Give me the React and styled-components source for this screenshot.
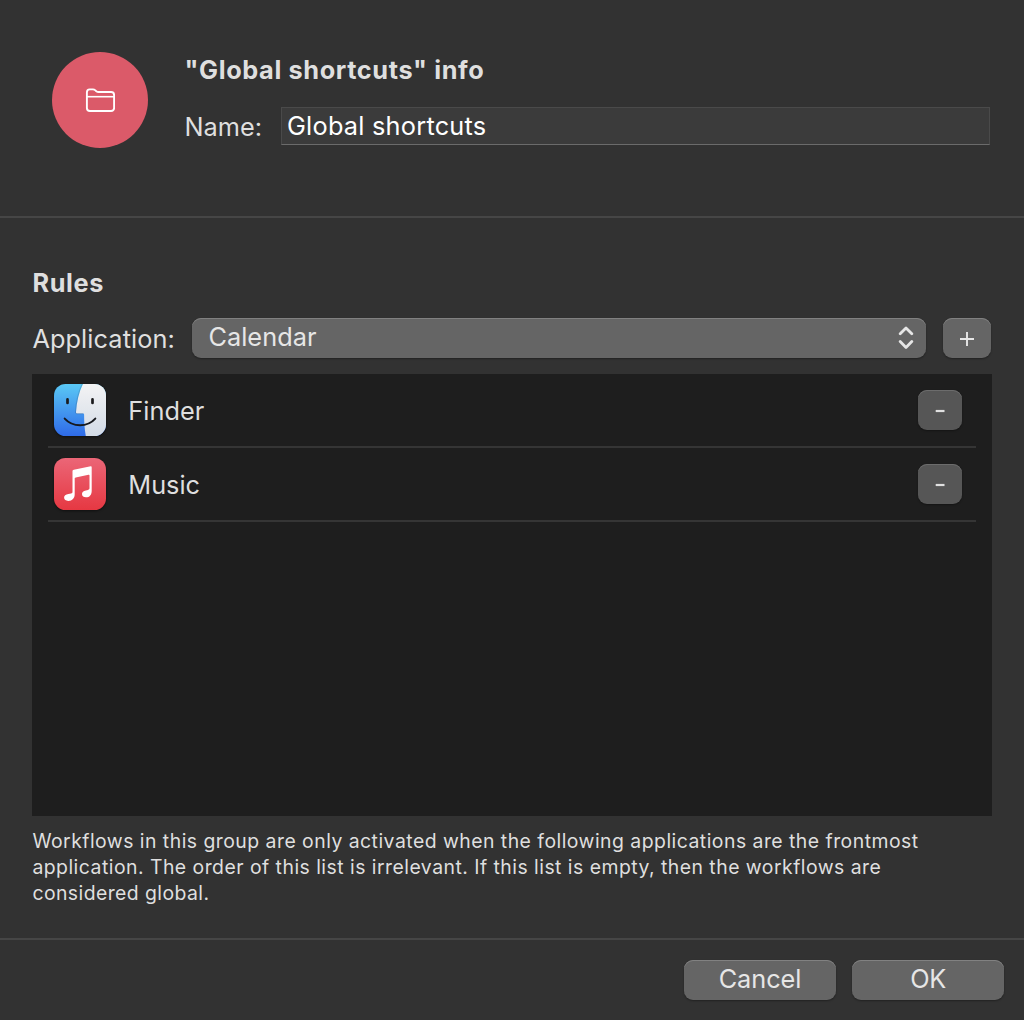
import React from "react";
import styled, { createGlobalStyle } from "styled-components";

const GlobalStyle = createGlobalStyle`
  * { box-sizing: border-box; }
  html, body { margin: 0; background: #323232; }
  body, button, input {
    font-family: Inter, "Liberation Sans", sans-serif;
    font-size: 25.3px;
    line-height: 32px;
    color: #dfdfdf;
  }
`;

const Dialog = styled.div`
  width: 1024px;
  height: 1020px;
  display: flex;
  flex-direction: column;
  overflow: hidden;
  background: #323232;
`;

const Header = styled.header`
  height: 218px;
  flex: none;
  display: flex;
  gap: 36px;
  padding: 52px 34px 0 52px;
  border-bottom: 2px solid #464646;
`;

const Badge = styled.div`
  width: 96px;
  height: 96px;
  flex: none;
  display: grid;
  place-items: center;
  border-radius: 50%;
  background: #db5a69;
`;

const Details = styled.div`
  flex: 1;
  display: flex;
  flex-direction: column;
`;

const Heading = styled.h2`
  margin: 0;
  padding: ${(p) => p.$top || 0}px 0 0 0.5px;
  font-size: 25.3px;
  line-height: 32px;
  font-weight: 700;
  letter-spacing: ${(p) => p.$track}px;
  white-space: nowrap;
`;

const Label = styled.label`
  display: block;
  width: ${(p) => p.$width}px;
  flex: none;
  padding: ${(p) => p.$top}px 0 0 0.4px;
  letter-spacing: ${(p) => p.$track}px;
  white-space: nowrap;
`;

const NameRow = styled.div`
  display: flex;
  margin-top: 21px;
`;

const NameInput = styled.input`
  flex: 1;
  min-width: 0;
  height: 38px;
  padding: 0 5px 2px;
  margin: 0;
  border: 1px solid #4a4a4a;
  border-bottom-color: #6b6b6b;
  border-radius: 0;
  outline: none;
  background: #3b3b3b;
  color: #fff;
  letter-spacing: ${(p) => p.$track}px;
`;

const Body = styled.main`
  flex: 1;
  padding: 49px 32px 0;
`;

const PickerRow = styled.div`
  display: flex;
  margin-top: 19px;
`;

const Button = styled.button`
  width: ${(p) => p.$width}px;
  height: 40px;
  flex: none;
  display: flex;
  align-items: center;
  justify-content: center;
  padding: 0 0 2px;
  border: 0;
  border-radius: 9px;
  background: ${(p) => (p.$dim ? "#565656" : "#656565")};
  box-shadow: inset 0 1px 0 ${(p) => (p.$dim ? "#6c6c6c" : "#818181")},
    0 1px 2px rgba(0, 0, 0, 0.35);
  color: #e6e6e6;
  letter-spacing: ${(p) => p.$track || 0}px;
`;

const Select = styled(Button)`
  justify-content: space-between;
  padding: 0 12px 2px 16.4px;
  margin-right: 17px;
`;

const SymbolButton = styled(Button)`
  padding: 1px 0 0;
`;

const List = styled.ul`
  height: 442px;
  margin: 16px 0 0;
  padding: 0 16px;
  list-style: none;
  background: #1e1e1e;
`;

const Item = styled.li`
  height: 74px;
  display: flex;
  align-items: center;
  padding: 0 14px 0 6px;
  border-bottom: 2px solid #353535;
`;

const AppName = styled.span`
  flex: 1;
  padding: 2px 0 0 21.3px;
  letter-spacing: ${(p) => p.$track}px;
`;

const AppIcon = styled.svg`
  display: block;
  width: 54px;
  height: 54px;
  margin: 0 0 0 -1px;
  overflow: visible;
  filter: drop-shadow(0 1px 1px rgba(0, 0, 0, 0.5));
`;

const Hint = styled.p`
  margin: 12px 0 0;
  padding-left: 0.4px;
  font-size: 19.4px;
  line-height: 26px;
  white-space: nowrap;
`;

const HintLine = styled.span`
  display: block;
  letter-spacing: ${(p) => p.$track}px;
`;

const Footer = styled.footer`
  height: 82px;
  flex: none;
  display: flex;
  justify-content: flex-end;
  gap: 16px;
  padding: 20px 20px 0;
  border-top: 2px solid #464646;
`;

function FolderIcon() {
  return (
    <svg width="30" height="24" viewBox="0 0 30 24" fill="none" stroke="#fff" strokeWidth="1.9" strokeLinejoin="round">
      <path d="M1.9 4.4c0-2 .8-3 2.8-3h3.2c1.2 0 1.7.3 2.5 1l.9.8c.7.5 1.2.8 2.2.8h12.6c2 0 3 1 3 3v13c0 2-1 3-3 3H4.9c-2 0-3-1-3-3z" />
      <path d="M1.9 8.7h27.2" strokeWidth="1.6" />
    </svg>
  );
}

function FinderIcon() {
  return (
    <AppIcon viewBox="0 0 54 54">
      <defs>
        <linearGradient id="sky" x1="0" y1="0" x2="0" y2="1">
          <stop offset="0" stopColor="#5ac8f5" />
          <stop offset="1" stopColor="#2f6be8" />
        </linearGradient>
        <linearGradient id="silver" x1="0" y1="0" x2="0" y2="1">
          <stop offset="0" stopColor="#f3f3f4" />
          <stop offset="1" stopColor="#d3dbe6" />
        </linearGradient>
        <clipPath id="tile"><rect x="1" y="1" width="52" height="52" rx="11.5" /></clipPath>
      </defs>
      <g clipPath="url(#tile)">
        <rect x="1" y="1" width="52" height="52" fill="url(#sky)" />
        <path d="M30 1C26 9 23.7 19 23 28.9c0 1 .4 1.5 1.3 1.5h5.8c.7 0 1 .4 1 1.1 0 7 .4 14.3 1.7 21.5H53V1z" fill="url(#silver)" />
        <path d="M29.2 1C25.2 9 23 19 22.5 28.9c0 1.2.6 1.8 1.6 1.8h6" fill="none" stroke="#25303d" strokeOpacity=".3" strokeWidth=".6" />
      </g>
      <path d="M14.5 16.4v3.6M39.5 16.4v3.6" stroke="#1b1b1d" strokeWidth="2.7" strokeLinecap="round" />
      <path d="M11.7 35.6c8 8.8 22.7 8.8 30.6 0" fill="none" stroke="#17191d" strokeWidth="2" strokeLinecap="round" />
    </AppIcon>
  );
}

function MusicIcon() {
  return (
    <AppIcon viewBox="0 0 54 54">
      <defs>
        <linearGradient id="rose" x1="0" y1="0" x2="0" y2="1">
          <stop offset="0" stopColor="#eb6677" />
          <stop offset="1" stopColor="#e63842" />
        </linearGradient>
      </defs>
      <rect x="1" y="1" width="52" height="52" rx="11.5" fill="url(#rose)" />
      <path
        d="M37.7 9.3 20.8 12.7c-.9.2-1.3.7-1.3 1.6v20.4c0 1-.5 1.6-1.5 1.8l-2.6.5c-2.8.5-4.3 1.7-4.3 3.6 0 2.1 1.7 3.3 4.2 3.3 4 0 6.4-2.6 6.4-6.6V21.8c0-.7.3-1 1-1.2l12.8-2.8c.7-.2 1 .1 1 .8v12.5c0 1-.5 1.6-1.5 1.8l-2.1.5c-2.6.5-3.9 1.7-3.9 3.6 0 2.1 1.6 3.3 4 3.3 3.6 0 5.7-2.6 5.7-6.4V10.4c0-.8-.3-1.2-1-1.1z"
        fill="#fff"
      />
    </AppIcon>
  );
}

function Chevrons() {
  return (
    <svg width="16" height="24" viewBox="0 0 16 24" fill="none" stroke="#e6e6e6" strokeWidth="2.8" strokeLinecap="round" strokeLinejoin="round">
      <path d="M2.2 8.8 8 3l5.8 5.8M2.2 16.6 8 22.4l5.8-5.8" />
    </svg>
  );
}

function Plus() {
  return (
    <svg width="14" height="14" viewBox="0 0 14 14" stroke="#e6e6e6" strokeWidth="1.9">
      <path d="M0 7h14M7 0v14" />
    </svg>
  );
}

function Minus() {
  return (
    <svg width="10" height="4" viewBox="0 0 10 4" stroke="#e0e0e0" strokeWidth="2.2">
      <path d="M.7 2h8.8" />
    </svg>
  );
}

const apps = [
  { name: "Finder", Icon: FinderIcon, track: 0.05 },
  { name: "Music", Icon: MusicIcon, track: 0 },
];

const hintLines = [
  { text: "Workflows in this group are only activated when the following applications are the frontmost", track: 0.475 },
  { text: "application. The order of this list is irrelevant. If this list is empty, then the workflows are", track: 0.475 },
  { text: "considered global.", track: 0.43 },
];

export default function App() {
  return (
    <Dialog>
      <GlobalStyle />
      <Header>
        <Badge><FolderIcon /></Badge>
        <Details>
          <Heading $top={2} $track={0.62}>"Global shortcuts" info</Heading>
          <NameRow>
            <Label htmlFor="name" $width={97} $top={4} $track={0.05}>Name:</Label>
            <NameInput id="name" defaultValue="Global shortcuts" $track={0.24} />
          </NameRow>
        </Details>
      </Header>
      <Body>
        <Heading $track={0.6}>Rules</Heading>
        <PickerRow>
          <Label $width={160} $top={5} $track={0.1}>Application:</Label>
          <Select $width={734} $track={0.05}>Calendar<Chevrons /></Select>
          <SymbolButton $width={48} aria-label="Add"><Plus /></SymbolButton>
        </PickerRow>
        <List>
          {apps.map(({ name, Icon, track }) => (
            <Item key={name}>
              <Icon />
              <AppName $track={track}>{name}</AppName>
              <SymbolButton $width={44} $dim aria-label={`Remove ${name}`}><Minus /></SymbolButton>
            </Item>
          ))}
        </List>
        <Hint>
          {hintLines.map((line) => (
            <HintLine key={line.text} $track={line.track}>{line.text}</HintLine>
          ))}
        </Hint>
      </Body>
      <Footer>
        <Button $width={152} $track={-0.05}>Cancel</Button>
        <Button $width={152} $track={-0.4}>OK</Button>
      </Footer>
    </Dialog>
  );
}
